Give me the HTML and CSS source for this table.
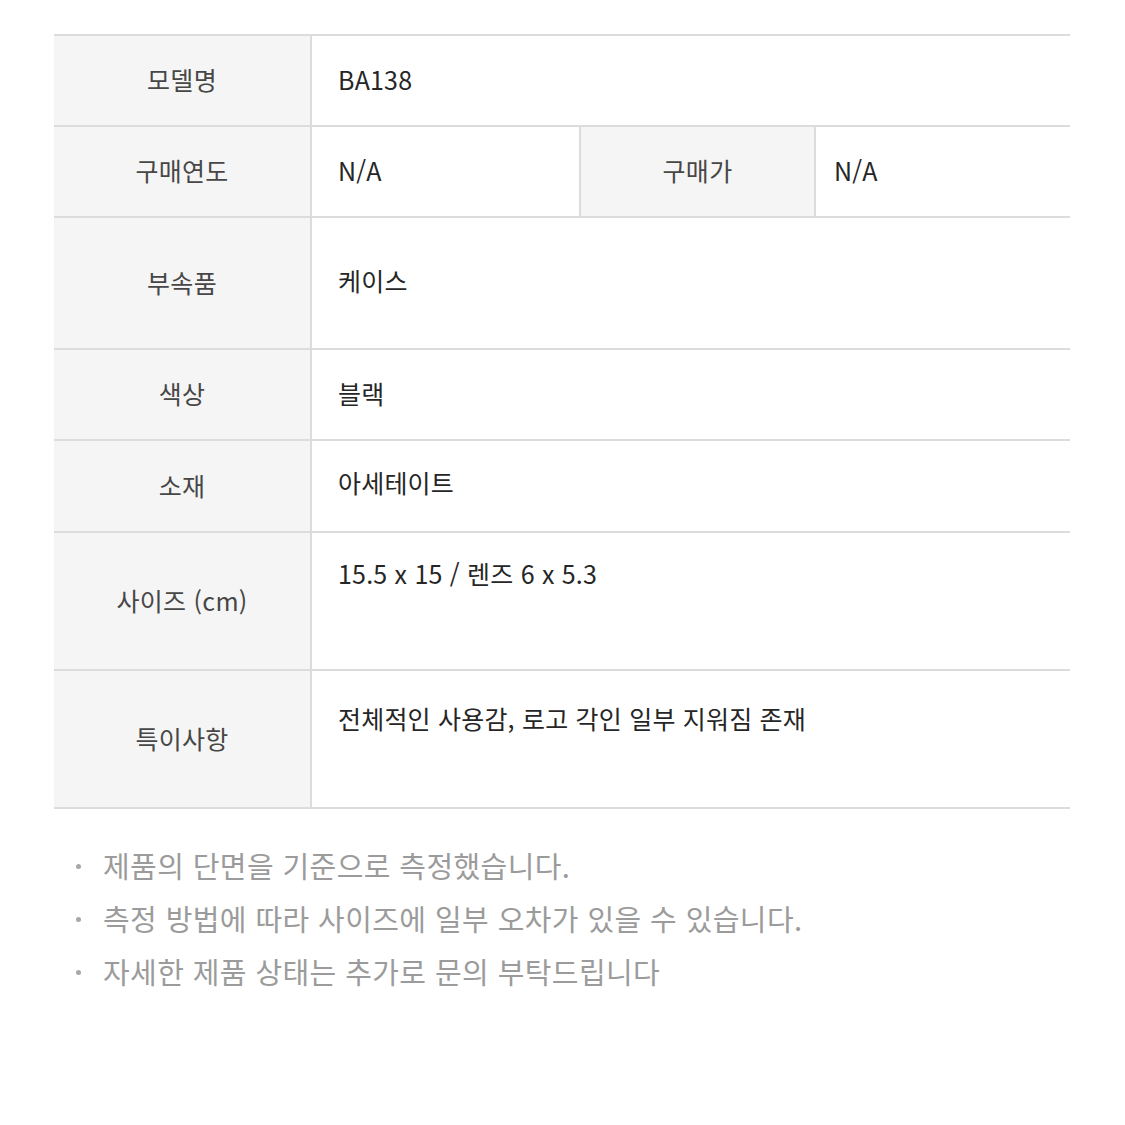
FILE: index.html
```html
<!DOCTYPE html>
<html lang="ko">
<head>
<meta charset="utf-8">
<title>상품 정보</title>
<link rel="stylesheet" href="styles.css">
</head>
<body>
<div class="page">
  <div class="spec">
    <div class="row h89">
      <div class="th">모델명</div>
      <div class="td">BA138</div>
    </div>
    <div class="row h89">
      <div class="th">구매연도</div>
      <div class="td td-half">N/A</div>
      <div class="th th-mid">구매가</div>
      <div class="td td-last">N/A</div>
    </div>
    <div class="row h130">
      <div class="th">부속품</div>
      <div class="td top pt44">케이스</div>
    </div>
    <div class="row h89">
      <div class="th">색상</div>
      <div class="td">블랙</div>
    </div>
    <div class="row h90">
      <div class="th">소재</div>
      <div class="td up">아세테이트</div>
    </div>
    <div class="row h136">
      <div class="th">사이즈 (cm)</div>
      <div class="td top pt22">15.5 x 15 / 렌즈 6 x 5.3</div>
    </div>
    <div class="row h136">
      <div class="th">특이사항</div>
      <div class="td top pt29">전체적인 사용감, 로고 각인 일부 지워짐 존재</div>
    </div>
  </div>
  <ul class="notes">
    <li>제품의 단면을 기준으로 측정했습니다.</li>
    <li>측정 방법에 따라 사이즈에 일부 오차가 있을 수 있습니다.</li>
    <li>자세한 제품 상태는 추가로 문의 부탁드립니다</li>
  </ul>
</div>
</body>
</html>
```

FILE: styles.css
```css
html, body {
  margin: 0;
  padding: 0;
  background: #ffffff;
}

body {
  font-family: "Noto Sans CJK KR", "Noto Sans", sans-serif;
}

.page {
  padding: 34px 55px 0 54px;
}

.spec {
  border-top: 2px solid #dcdcdc;
}

.row {
  display: flex;
  border-bottom: 2px solid #dcdcdc;
}

.h89 { height: 89px; }
.h90 { height: 90px; }
.h130 { height: 130px; }
.h136 { height: 136px; }

.th {
  width: 258px;
  flex: none;
  box-sizing: border-box;
  padding-bottom: 3px;
  background: #f5f5f5;
  border-right: 2px solid #dcdcdc;
  display: flex;
  align-items: center;
  justify-content: center;
  font-size: 25px;
  letter-spacing: 0.3px;
  line-height: 36px;
  color: #474747;
}

.th-mid {
  width: 237px;
  border-left: 2px solid #dcdcdc;
}

.td {
  flex: 1;
  display: flex;
  align-items: center;
  padding-left: 26px;
  padding-bottom: 3px;
  font-size: 25px;
  letter-spacing: 0.2px;
  line-height: 36px;
  color: #262626;
}

.td-half {
  flex: none;
  width: 241px;
}

.td-last {
  padding-left: 18px;
}

.td.top {
  align-items: flex-start;
  padding-bottom: 0;
}

.td.up {
  padding-bottom: 9px;
}

.pt22 { padding-top: 22px; }
.pt29 { padding-top: 29px; }
.pt44 { padding-top: 44px; }

.notes {
  list-style: none;
  margin: 30px 0 0 0;
  padding: 0;
}

.notes li {
  position: relative;
  padding-left: 49px;
  font-size: 29px;
  letter-spacing: 0.4px;
  line-height: 53px;
  color: #9b9b9b;
}

.notes li::before {
  content: "";
  position: absolute;
  left: 22px;
  top: 25px;
  width: 5px;
  height: 5px;
  border-radius: 50%;
  background: #a8a8a8;
}
```
